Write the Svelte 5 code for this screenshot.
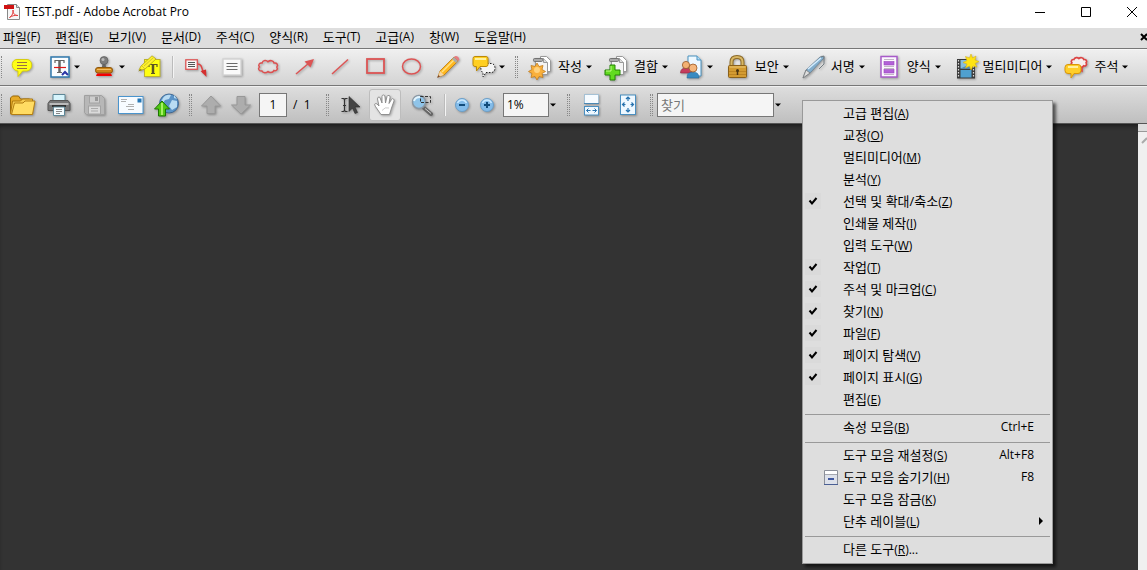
<svelte:options runes />
<script lang="ts">
  interface Tool {
    icon?: string;
    title?: string;
    text?: string;
    caret?: boolean;
    divider?: boolean;
    grip?: boolean;
  }

  interface MenuEntry {
    label?: string;
    key?: string;
    tail?: string;
    checked?: boolean;
    shortcut?: string;
    icon?: boolean;
    submenu?: boolean;
    separator?: boolean;
  }

  const menus = [
    { label: '파일', key: 'F' },
    { label: '편집', key: 'E' },
    { label: '보기', key: 'V' },
    { label: '문서', key: 'D' },
    { label: '주석', key: 'C' },
    { label: '양식', key: 'R' },
    { label: '도구', key: 'T' },
    { label: '고급', key: 'A' },
    { label: '창', key: 'W' },
    { label: '도움말', key: 'H' },
  ];

  const markupTools: Tool[] = [
    { icon: 'note', title: '스티커 메모' },
    { icon: 'textedit', title: '텍스트 편집', caret: true },
    { icon: 'stamp', title: '스탬프', caret: true },
    { icon: 'highlight', title: '텍스트 강조 표시' },
    { divider: true },
    { icon: 'callout', title: '설명선' },
    { icon: 'textbox', title: '텍스트 상자' },
    { icon: 'cloud', title: '구름' },
    { icon: 'arrow', title: '화살표' },
    { icon: 'line', title: '선' },
    { icon: 'rect', title: '직사각형' },
    { icon: 'ellipse', title: '타원' },
    { icon: 'pencil', title: '연필' },
    { icon: 'bubbles', title: '주석 표시', caret: true },
    { grip: true },
    { icon: 'create', text: '작성', caret: true },
    { icon: 'combine', text: '결합', caret: true },
    { icon: 'people', title: '공동 작업', caret: true },
    { icon: 'lock', text: '보안', caret: true },
    { icon: 'pen', text: '서명', caret: true },
    { icon: 'form', text: '양식', caret: true },
    { icon: 'film', text: '멀티미디어', caret: true },
    { icon: 'comments', text: '주석', caret: true },
  ];

  const fileTools: Tool[] = [
    { icon: 'folder', title: '열기' },
    { icon: 'printer', title: '인쇄' },
    { icon: 'save', title: '저장' },
    { icon: 'mail', title: '전자 메일' },
    { icon: 'upload', title: '업로드' },
  ];

  const entries: MenuEntry[] = [
    { label: '고급 편집', key: 'A' },
    { label: '교정', key: 'O' },
    { label: '멀티미디어', key: 'M' },
    { label: '분석', key: 'Y' },
    { label: '선택 및 확대/축소', key: 'Z', checked: true },
    { label: '인쇄물 제작', key: 'I' },
    { label: '입력 도구', key: 'W' },
    { label: '작업', key: 'T', checked: true },
    { label: '주석 및 마크업', key: 'C', checked: true },
    { label: '찾기', key: 'N', checked: true },
    { label: '파일', key: 'F', checked: true },
    { label: '페이지 탐색', key: 'V', checked: true },
    { label: '페이지 표시', key: 'G', checked: true },
    { label: '편집', key: 'E' },
    { separator: true },
    { label: '속성 모음', key: 'B', shortcut: 'Ctrl+E' },
    { separator: true },
    { label: '도구 모음 재설정', key: 'S', shortcut: 'Alt+F8' },
    { label: '도구 모음 숨기기', key: 'H', shortcut: 'F8', icon: true },
    { label: '도구 모음 잠금', key: 'K' },
    { label: '단추 레이블', key: 'L', submenu: true },
    { separator: true },
    { label: '다른 도구', key: 'R', tail: '...' },
  ];

  const cloudPath =
    'M6 16C3 16.500 1.500 13.500 3.500 12C1.500 9.500 4 7.500 6 8C7 5 10.500 5 12 6.800C14 4.800 17.500 5.500 18 8C21 7.500 22.500 10 20.800 12C22.500 14.500 20 16.500 18 15.500C16.500 18 13.500 18 12 16.500C10 18.500 7 18 6 16Z';

  let page = $state('1');
  let zoom = $state('1%');
  let query = $state('');
</script>

{#snippet caret()}
  <svg class="caret" viewBox="0 0 6 4" aria-hidden="true"><path d="M0 0.500h6L3 3.500z" /></svg>
{/snippet}

{#snippet papers()}
  <path d="M12.500 1.500h6l4 4v11h-10z" fill="#fff" stroke="#999" />
  <path d="M7.500 3.500h8l4 4v12h-12z" fill="#f4f4f4" stroke="#999" />
  <path d="M15.500 3.500v4h4" fill="#ddd" stroke="#999" />
  <rect x="5.500" y="3.500" width="9" height="3" rx="1" fill="#aaa" stroke="#666" stroke-width=".8" />
{/snippet}

{#snippet icon(name: string)}
  <svg class="icon" viewBox="0 0 24 24" fill="none" aria-hidden="true">
    {#if name === 'note'}
      <path d="M6 4.500h10c6 0 6.500 10.500 0 11.500h-4.500L7 21.500V16C-.5 15.500-.5 4.500 6 4.500z" fill="#ffff16" stroke="#d6cc10" />
      <path d="M6 7.500h10M6 10.500h10M6 13.500h10" stroke="#9a7043" />
    {:else if name === 'textedit'}
      <rect x="4" y="2" width="18" height="20" fill="#fafdff" stroke="#2f78ad" stroke-width="1.500" />
      <path d="M8 8V5.500h9V8M10 17.500h5" stroke="#666" stroke-width="1.200" />
      <path d="M12.500 5v12" stroke="#666" stroke-width="2.500" />
      <path d="M7 12.500h12" stroke="#e01818" stroke-width="1.200" />
      <path d="M15 20l3-3 3 3" stroke="#2b35a5" stroke-width="2" />
    {:else if name === 'stamp'}
      <path d="M10.500 9h3l1 5h-5z" fill="#666" />
      <circle cx="12" cy="5.500" r="4" fill="#7d7d7d" stroke="#555" stroke-width=".6" />
      <circle cx="11" cy="4.500" r="1.500" fill="#bbb" />
      <rect x="3.500" y="12.500" width="17" height="5.500" rx="2.500" fill="#cc8418" stroke="#8f570b" />
      <path d="M5 14.500h14" stroke="#f2bd61" />
      <path d="M5 18.500h14l1 2.500H4z" fill="#f50000" />
    {:else if name === 'highlight'}
      <rect x="7.500" y="4.500" width="15.500" height="17" fill="#ffff10" stroke="#bdb32c" />
      <path d="M12 12V9.500h8V12M14 18.500h4" stroke="#5c5524" stroke-width="1.200" />
      <path d="M16 9v9" stroke="#5c5524" stroke-width="2.500" />
      <path d="M2 15l2-4L15 .8l4 3.200L8 14l-5 1.500z" fill="#fff329" stroke="#b1a51d" stroke-width=".8" />
      <path d="M5 11l3 3M7 11l9-8" stroke="#d0c435" />
      <path d="M1 16.500l2.500-2.500 1.500 1z" fill="#887c15" />
    {:else if name === 'callout'}
      <rect x="1.800" y="4.800" width="11.500" height="9.500" fill="#f7f7f7" stroke="#dc5454" stroke-width="1.300" />
      <path d="M4 7.500h7M4 9.500h7M4 11.500h7" stroke="#555" />
      <path d="M13.500 9c4 0 4 3 6 9" stroke="#dc4444" stroke-width="1.500" />
      <path d="M16.500 16l5.500-1.500.5 7.500z" fill="#d52f2f" />
    {:else if name === 'textbox'}
      <rect x="3" y="4" width="18" height="16" fill="#fafafa" stroke="#d4d4d4" stroke-width="1.500" />
      <path d="M6.500 8.500h11M6.500 11.500h11M6.500 14.500h11" stroke="#6b6b6b" />
    {:else if name === 'cloud'}
      <path d={cloudPath} stroke="#dc5050" stroke-width="1.500" />
    {:else if name === 'arrow'}
      <path d="M4 19L17 8" stroke="#dc5454" stroke-width="1.500" />
      <path d="M22 4l-3.500 8.500-6-6z" fill="#dc5454" />
    {:else if name === 'line'}
      <path d="M4 19L20 4.500" stroke="#dc5454" stroke-width="1.500" />
    {:else if name === 'rect'}
      <rect x="3" y="4" width="17" height="14" stroke="#dc5454" stroke-width="1.800" />
    {:else if name === 'ellipse'}
      <ellipse cx="11.500" cy="11.500" rx="9" ry="7.500" stroke="#dc5454" stroke-width="1.500" />
    {:else if name === 'pencil'}
      <path d="M2 22l2-6L18 2l4 4L8 20z" fill="#ffb820" stroke="#b77810" stroke-width=".8" />
      <path d="M6 17L19 4" stroke="#ffe184" stroke-width="1.500" />
      <path d="M2 22l2-6 4 4z" fill="#f5d4a2" />
      <path d="M1 23l1.500-3 1.500 1.500z" fill="#7b4728" />
      <path d="M16 4l2-2 4 4-2 2z" fill="#aaa" />
      <path d="M18 2c2-3 7 1 4.500 4z" fill="#e77a80" />
    {:else if name === 'bubbles'}
      <path
        d="M12 8.500h8c4 1 4 8 0 9h-6l-3 4.500v-4.500c-3-1-3-8 1-9z"
        fill="#f4f4f4"
        stroke="#222"
        stroke-dasharray="1.500 1.500"
      />
      <path d="M3 1.500h11q2 0 2 2v6q0 2-2 2H8L4.500 16v-4.500H3q-2 0-2-2v-6q0-2 2-2z" fill="#ffcf22" stroke="#bc8908" />
      <path d="M3 4h11" stroke="#fff19b" stroke-width="2" />
    {:else if name === 'create'}
      {@render papers()}
      <path
        d="M9 8l2 3.500 4-1-1 4 3.500 2-3.500 2 1 4-4-1L9 25l-2-3.500-4 1 1-4-3.500-2 3.500-2-1-4 4 1z"
        fill="#f9b03c"
        stroke="#c27c1d"
        stroke-width=".8"
      />
      <circle cx="9" cy="15" r="3" fill="#ffd27e" />
    {:else if name === 'combine'}
      {@render papers()}
      <path d="M6 10h5v5h5v5h-5v5H6v-5H1v-5h5z" fill="#62db20" stroke="#258405" />
      <path d="M7 11v5H2" stroke="#bfff83" />
    {:else if name === 'people'}
      <path d="M8 1h9l4 4v16H8z" fill="#edf8ff" stroke="#4b93c0" />
      <path d="M17 1v4h4" fill="#b6ddf4" stroke="#4b93c0" />
      <path d="M.5 18q0-5 5.500-5t5.500 5z" fill="#c53c5d" stroke="#8d263f" stroke-width=".6" />
      <circle cx="6" cy="10" r="3.600" fill="#f3b173" stroke="#985926" stroke-width=".8" />
      <path d="M7 23q0-6 6-6t6 6z" fill="#398bc1" stroke="#276999" stroke-width=".6" />
      <circle cx="13" cy="13" r="4" fill="#f5b77d" stroke="#985926" stroke-width=".8" />
    {:else if name === 'lock'}
      <path d="M6.500 11V7q0-5 5.500-5t5.500 5v4" stroke="#8c6a27" stroke-width="4" />
      <path d="M6.500 11V7q0-5 5.500-5t5.500 5v4" stroke="#d8b765" stroke-width="2" />
      <rect x="3.500" y="10.500" width="18" height="12" rx="1" fill="#d39b31" stroke="#8a611a" />
      <path d="M4.500 12h16" stroke="#ecc878" />
      <path d="M4 16.500h17M4 19.500h17" stroke="#bd8422" />
      <circle cx="12.500" cy="15.500" r="1.500" fill="#4d3610" />
      <path d="M12.500 16v4" stroke="#4d3610" stroke-width="1.500" />
    {:else if name === 'pen'}
      <path d="M2 23l3-8L19 2q4-2 4 1L10 17z" fill="#81adcc" stroke="#6d8090" stroke-width=".8" />
      <path d="M7 14L20 3" stroke="#d4edff" stroke-width="1.500" />
      <path d="M2 23l3-8 4 3z" fill="#ddd" stroke="#777" stroke-width=".8" />
      <path d="M20 2l3-1v8l-5 5" stroke="#737d83" />
    {:else if name === 'form'}
      <rect x="4" y="1.500" width="16" height="20.500" fill="#fcf7ff" stroke="#a85bc9" stroke-width="1.500" />
      <path d="M7 4.500h10M7 11.500h10M7 13.500h10M7 19.500h10" stroke="#c2b8c6" />
      <rect x="7" y="6.500" width="10" height="3.500" fill="#b260d8" stroke="#9a48bd" stroke-width=".6" />
      <rect x="7" y="14.500" width="10" height="3.500" fill="#b260d8" stroke="#9a48bd" stroke-width=".6" />
    {:else if name === 'film'}
      <rect x="4" y="4" width="18" height="19.500" fill="#3a3a3a" />
      <path d="M5.500 5v18M20.500 5v18" stroke="#ddd" stroke-width="1.200" stroke-dasharray="1.500 1.500" />
      <rect x="7.500" y="5" width="11" height="8.500" fill="#86bedd" />
      <rect x="7.500" y="15" width="11" height="7.500" fill="#4fa0cf" />
      <path d="M7.500 13.500l11-5v5z" fill="#4c8dba" />
      <path
        d="M18-1l1.500 4 3.500-2-1 4 4 1.500-4 2 2 3.500-4-1-2 4-1.500-4-4 2 1.500-4-4-1.500 4-2-1.500-4 4 1.500z"
        fill="#ffe313"
        stroke="#d8b616"
        stroke-width=".6"
      />
    {:else if name === 'comments'}
      <g transform="translate(5 -2) scale(.82)">
        <path d={cloudPath} fill="#f6efee" stroke="#dc4444" stroke-width="2" />
      </g>
      <path d="M18 12v4l-3-2" stroke="#dc4444" stroke-width="1.500" />
      <path d="M4 9.500h10q3 0 3 3v3q0 3-3 3H10L7 23v-4.500H4q-3 0-3-3v-3q0-3 3-3z" fill="#ffce29" stroke="#d99609" />
      <path d="M4 12h10" stroke="#fff0a0" stroke-width="2" />
    {:else if name === 'folder'}
      <path d="M-.5 20V5l2-2h6l2 3h9v4" fill="#e6aa27" stroke="#9b6907" />
      <path d="M-.5 21l2-13h8l2-2h10v15z" fill="#f6cb50" stroke="#ad7810" />
      <path d="M.5 21.500L3.500 10H12l2-2h10l-2.500 13.500z" fill="#ffdc63" stroke="#b27d12" />
    {:else if name === 'printer'}
      <path d="M6 9V1.500h12V9" fill="#d7f4fc" stroke="#5d8797" />
      <path d="M3 7.500h18l2 3v7H1v-7z" fill="#777" stroke="#555" />
      <path d="M2.500 11h19" stroke="#bbb" stroke-width="2" />
      <path d="M5 13h14" stroke="#333" stroke-width="2" />
      <path d="M6.500 14h11v8.500h-11z" fill="#f5fcff" stroke="#5d8797" />
      <path d="M9 16.500h6M9 18.500h6M9 20.500h4" stroke="#888" />
    {:else if name === 'save'}
      <path d="M1.500 2.500h17l3 3v16h-18l-2-2z" fill="#b7b7b7" stroke="#a0a0a0" />
      <rect x="6.500" y="3" width="10" height="7" fill="#cdcdcd" stroke="#a3a3a3" />
      <rect x="12" y="4" width="3" height="4" fill="#999" />
      <rect x="5.500" y="13" width="12" height="8" fill="#dadada" stroke="#a3a3a3" />
      <path d="M8 15.500h7M8 18h7" stroke="#aaa" />
    {:else if name === 'mail'}
      <rect x="-.5" y="3.500" width="24.500" height="17" fill="#f7fbff" stroke="#4a94cd" />
      <rect x="18.500" y="5.500" width="4" height="4" fill="#2577b5" />
      <path d="M2 6.500h6M2 8.500h5M9 11.500h6M7 13.500h8M9 16.500h6" stroke="#b0b0b0" />
    {:else if name === 'upload'}
      <circle cx="14" cy="10.500" r="9.500" fill="#5b93c7" stroke="#315d8c" stroke-width=".8" />
      <path d="M8 5q3-4 8-3l-2 4-4 1-2 3-2-1zM17 7l5 1v6l-5 3-3-4zM19 2l3 4-3-1z" fill="#b9dcf3" />
      <path d="M7 8l7.500 8h-4v7h-7v-7h-4z" fill="#52c814" stroke="#1d7600" />
      <path d="M7 10v12" stroke="#a7f066" stroke-width="2" />
    {:else if name === 'up'}
      <path d="M12 3l9.500 10H16v7.500H8V13H2.500z" fill="#adadad" stroke="#989898" />
    {:else if name === 'down'}
      <path d="M12 21l9.500-9H16V3.500H8V12H2.500z" fill="#adadad" stroke="#989898" />
    {:else if name === 'select'}
      <path d="M2.500 5.500h2l1 1 1-1h2M5.500 6v12M2.500 18.500h2l1-1 1 1h2M4 12.500h3" stroke="#333" stroke-width="1.200" />
      <path d="M10 3.500v15l3.500-3.500 2.500 5.500 2.500-1-2.500-5.500h5z" fill="#444" stroke="#292929" stroke-width=".6" />
    {:else if name === 'hand'}
      <path
        d="M8 21.500L3.500 15q-3-4-1-4.500 1-.5 3.500 2.500L4.500 6q0-2 1.500-2 1 0 1.500 2l1.500 4V3.500Q9 2 10.500 2T12 4l.5 6 1.500-6.500q.5-1.500 2-1t1 2L16 10.500l2.500-4q1-1.500 2-.5t.5 2L18.500 15l-2 6.500z"
        fill="#fff"
        stroke="#888"
        stroke-width=".9"
      />
      <path d="M9 17.500q3-4 7-2.500" stroke="#ccc" />
    {:else if name === 'marquee'}
      <path d="M15 15l7 6" stroke="#666" stroke-width="4" stroke-linecap="round" />
      <path d="M16 15.500l6 5" stroke="#ccc" />
      <circle cx="10" cy="9" r="6.500" fill="#8fc4e9" stroke="#8b97a3" stroke-width="1.500" />
      <path d="M5 8q1-4 6-4" stroke="#e3f6ff" stroke-width="2" />
      <rect x="11.500" y="3.500" width="10" height="6" stroke="#333" stroke-dasharray="3 1.500" />
    {:else if name === 'minus' || name === 'plus'}
      <circle cx="12" cy="12" r="6.500" fill="#83bcea" stroke="#6c9fc8" />
      <path d="M7.500 10q1.500-3 4.500-3t4.500 3" stroke="#cae9ff" stroke-width="1.500" />
      <path d={name === 'plus' ? 'M9 12h6M12 9v6' : 'M9 12h6'} stroke="#124c7b" stroke-width="2" />
    {:else if name === 'fitwidth'}
      <rect x="4.500" y="1.500" width="14" height="9" fill="#f6fbff" stroke="#a5c1d5" />
      <path d="M4 10.500h15" stroke="#4b88b4" />
      <rect x="4.500" y="13.500" width="14" height="8.500" fill="#eff8ff" stroke="#4b8fc0" />
      <path d="M6.500 17.500h4M12.500 17.500h4M8.500 15.500l-2 2 2 2M14.500 15.500l2 2-2 2" stroke="#2772ae" />
    {:else if name === 'fitpage'}
      <rect x="4.500" y="2" width="15" height="19.500" fill="#eff8ff" stroke="#4b8fc0" />
      <path
        d="M12 4v4M12 15v4M6.500 11.500h3M14.500 11.500h3M10 6l2-2 2 2M10 17l2 2 2-2M8.500 9.500l-2 2 2 2M15.500 9.500l2 2-2 2"
        stroke="#2772ae"
        stroke-width="1.200"
      />
    {/if}
  </svg>
{/snippet}

{#snippet toolButton(tool: Tool, extra = '')}
  <button class="tool {extra}" title={tool.title} aria-label={tool.text ?? tool.title}>
    {@render icon(tool.icon ?? '')}
    {#if tool.text}<span class="tool-text">{tool.text}</span>{/if}
    {#if tool.caret}{@render caret()}{/if}
  </button>
{/snippet}

<div class="window">
  <header class="titlebar">
    <svg class="logo" viewBox="0 0 16 16" aria-hidden="true">
      <path d="M3.500.5h9l3 3v12h-12z" fill="#f7f7f7" stroke="#888" />
      <path d="M12.500.5v3h3" fill="#ddd" stroke="#888" />
      <path d="M0 1h10v4H0z" fill="#cf1212" />
      <path d="M5.500 13.500c3-2 4-5 3.500-7.500 0 4 2 5.500 5 5.500-4-.5-6 .5-8.500 2z" fill="none" stroke="#e33d3d" />
    </svg>
    <h1>TEST.pdf - Adobe Acrobat Pro</h1>
    <div class="controls">
      <button aria-label="최소화"><svg viewBox="0 0 10 10"><path d="M0 5.500h10" /></svg></button>
      <button aria-label="최대화"><svg viewBox="0 0 10 10"><path d="M.5.5h9v9h-9z" /></svg></button>
      <button aria-label="닫기"><svg viewBox="0 0 10 10"><path d="M0 0l10 10M10 0L0 10" /></svg></button>
    </div>
  </header>

  <nav class="menubar" aria-label="메뉴">
    {#each menus as menu (menu.key)}
      <button>{menu.label}<span class="latin">({menu.key})</span></button>
    {/each}
    <button class="close-doc" aria-label="문서 닫기">
      <svg viewBox="0 0 6 6"><path d="M0 0l6 6M6 0L0 6" /></svg>
    </button>
  </nav>

  <div class="toolbar toolbar-light">
    <span class="grip grip-edge"></span>
    {#each markupTools as tool}
      {#if tool.divider}
        <span class="divider"></span>
      {:else if tool.grip}
        <span class="grip"></span>
      {:else}
        {@render toolButton(tool)}
      {/if}
    {/each}
  </div>

  <div class="toolbar toolbar-dark">
    <span class="grip grip-edge"></span>
    {#each fileTools as tool}
      {@render toolButton(tool)}
    {/each}
    <span class="grip"></span>
    {@render toolButton({ icon: 'up', title: '이전 페이지' }, 'tool-page')}
    {@render toolButton({ icon: 'down', title: '다음 페이지' }, 'tool-page')}
    <label class="page">
      <input class="field field-page" aria-label="페이지" bind:value={page} />
      <span>/&nbsp; 1</span>
    </label>
    <span class="grip"></span>
    {@render toolButton({ icon: 'select', title: '선택 도구' })}
    {@render toolButton({ icon: 'hand', title: '손 도구' }, 'tool-active')}
    {@render toolButton({ icon: 'marquee', title: '선택 윤곽 확대/축소' })}
    <span class="divider"></span>
    {@render toolButton({ icon: 'minus', title: '축소' }, 'tool-zoom')}
    {@render toolButton({ icon: 'plus', title: '확대' }, 'tool-zoom')}
    <input class="field field-zoom" aria-label="배율" bind:value={zoom} />
    <button class="drop" aria-label="배율 목록">{@render caret()}</button>
    <span class="grip"></span>
    {@render toolButton({ icon: 'fitwidth', title: '폭 맞추기' })}
    {@render toolButton({ icon: 'fitpage', title: '한 페이지' })}
    <span class="grip"></span>
    <input class="field field-find" aria-label="찾기" placeholder="찾기" bind:value={query} />
    <button class="drop" aria-label="찾기 옵션">{@render caret()}</button>
  </div>

  <main class="workspace">
    <div class="scrollbar">
      <div class="split"></div>
      <svg viewBox="0 0 9 8"><path d="M4 7l5-5" /></svg>
    </div>
  </main>

  <div class="popup" role="menu">
    {#each entries as entry}
      {#if entry.separator}
        <hr />
      {:else}
        <button
          class="entry"
          role={entry.checked ? 'menuitemcheckbox' : 'menuitem'}
          aria-checked={entry.checked ? true : undefined}
        >
          <span class="check" class:checked={entry.checked}>
            {#if entry.checked}
              <svg viewBox="0 0 8 8"><path d="M.5 3.500L3 6.500 7.500 1" /></svg>
            {/if}
          </span>
          <span class="entry-icon">
            {#if entry.icon}
              <svg viewBox="0 0 14 15">
                <path d="M.5.500h13v14H.5z" fill="#dde1ea" stroke="#8b8f99" />
                <path d="M1 1h12v3H1z" fill="#fff" />
                <path d="M1 4.500h12" stroke="#a5a8b0" />
                <path d="M4 9h6" stroke="#3f57a0" stroke-width="2" />
                <path d="M0 14.500h14" stroke="#4a5f94" />
              </svg>
            {/if}
          </span>
          <span class="entry-label">{entry.label}<span class="latin">(<u>{entry.key}</u>){entry.tail ?? ''}</span></span>
          <span class="shortcut latin">{entry.shortcut ?? ''}</span>
          {#if entry.submenu}
            <svg class="submenu" viewBox="0 0 4 8"><path d="M0 0l4 4-4 4z" /></svg>
          {/if}
        </button>
      {/if}
    {/each}
  </div>
</div>

<style>
  :global(body) {
    margin: 0;
  }

  .window {
    position: relative;
    display: flex;
    flex-direction: column;
    min-height: 100vh;
    overflow: hidden;
    background: #333;
    color: #000;
    font-family: 'Open Sans', 'Noto Sans CJK KR', sans-serif;
    font-size: 13px;
    line-height: 16px;
  }

  button {
    display: flex;
    align-items: center;
    padding: 0;
    border: none;
    background: none;
    color: inherit;
    font: inherit;
    white-space: nowrap;
  }

  svg {
    display: block;
    flex-shrink: 0;
    overflow: visible;
  }

  .latin {
    font-size: 12px;
  }

  .titlebar {
    display: flex;
    align-items: center;
    height: 28px;
    padding: 0 10px 4px 4px;
    box-sizing: border-box;
    background: #fff;
  }

  .logo {
    width: 16px;
    height: 16px;
  }

  h1 {
    flex: 1;
    margin: 0 0 0 5px;
    font-size: 12px;
    font-weight: 400;
  }

  .controls {
    display: flex;
    gap: 36px;
  }

  .controls svg {
    width: 10px;
    height: 10px;
    fill: none;
    stroke: #000;
  }

  .menubar {
    display: flex;
    align-items: center;
    gap: 15px;
    height: 20px;
    padding: 0 0 3px 3px;
    box-sizing: border-box;
    background: #dedede;
  }

  .close-doc {
    margin-left: auto;
  }

  .close-doc svg {
    width: 6px;
    height: 6px;
    stroke: #000;
    stroke-width: 2;
  }

  .toolbar {
    display: flex;
    align-items: center;
    box-sizing: border-box;
    border-top: 1px solid #777;
  }

  .toolbar-light {
    height: 37px;
    padding-bottom: 1px;
    background: linear-gradient(#f0f0f0, #d3d3d3);
    box-shadow: inset 0 1px #f8f8f8;
  }

  .toolbar-dark {
    height: 39px;
    border-bottom: 1px solid #555;
    background: linear-gradient(#dedede, #bfbfbf);
    box-shadow: inset 0 1px #f0f0f0;
  }

  .grip {
    width: 3px;
    height: 22px;
    margin: 0 4px;
    box-sizing: border-box;
    flex-shrink: 0;
    border: 1px dotted #888;
    border-width: 0 1px;
  }

  .grip-edge {
    width: 1px;
    margin: 0 3px 0 1px;
    border-right: none;
  }

  .divider {
    width: 1px;
    height: 22px;
    margin: 0 5px;
    flex-shrink: 0;
    background: #bbb;
    box-shadow: 1px 0 #f4f4f4;
  }

  .tool {
    height: 30px;
    padding: 0 6px;
    flex-shrink: 0;
  }

  .tool-text {
    margin: 0 1px 1px 6px;
  }

  .tool-page {
    padding: 0 3px;
  }

  .tool-zoom {
    width: 25px;
    padding: 0;
  }

  .tool-active {
    height: 32px;
    margin-right: 2px;
    padding: 0 3px;
    border: 1px solid #bdbdbd;
    border-radius: 3px;
    background: #e4e4e4;
  }

  .icon {
    width: 24px;
    height: 24px;
    filter: drop-shadow(1px 1px 1px rgb(0 0 0 / 30%));
  }

  .caret {
    width: 6px;
    height: 4px;
    margin-left: 3px;
  }

  .page {
    display: flex;
    align-items: center;
    margin: 0 12px 0 3px;
    font-size: 12px;
  }

  .page span {
    width: 17px;
    margin-left: 6px;
    white-space: nowrap;
  }

  .field {
    height: 24px;
    box-sizing: border-box;
    border: 1px solid #777;
    border-radius: 0;
    outline: none;
    background: #f5f5f5;
    color: #000;
    font: inherit;
  }

  .field-page {
    width: 28px;
    padding: 0;
    text-align: center;
  }

  .field-zoom {
    width: 46px;
    margin-left: 3px;
    padding: 0 3px;
    font-size: 12px;
  }

  .field-find {
    width: 117px;
    padding: 0 3px;
  }

  .field-find::placeholder {
    color: #777;
  }

  .drop {
    width: 14px;
    height: 24px;
  }

  .drop .caret {
    margin-left: 1px;
  }

  .workspace {
    display: flex;
    flex: 1;
    justify-content: flex-end;
    box-shadow: inset 0 4px 4px -2px #1c1c1c;
  }

  .scrollbar {
    width: 9px;
    background: #f0f0f0;
  }

  .split {
    height: 7px;
    border-bottom: 1px solid #999;
    background: #dedede;
  }

  .scrollbar svg {
    width: 9px;
    height: 8px;
    margin-top: 4px;
    stroke: #aaa;
    stroke-width: 2;
  }

  .popup {
    position: absolute;
    top: 100px;
    left: 802px;
    width: 251px;
    padding: 1px 2px 3px;
    box-sizing: border-box;
    border: 1px solid #999;
    background: #dedede;
    box-shadow: 3px 3px 3px rgb(0 0 0 / 60%);
  }

  .popup hr {
    height: 1px;
    margin: 4px 0 1px;
    border: none;
    background: #999;
  }

  .entry {
    position: relative;
    width: 100%;
    height: 22px;
    padding: 0 16px 0 0;
  }

  .check {
    display: flex;
    align-items: center;
    justify-content: center;
    width: 16px;
    height: 16px;
  }

  .checked {
    background: #dadada;
  }

  .check svg {
    width: 8px;
    height: 8px;
    fill: none;
    stroke: #000;
    stroke-width: 2;
  }

  .entry-icon {
    width: 19px;
    margin-right: 3px;
  }

  .entry-icon svg {
    width: 14px;
    height: 15px;
    margin-left: 3px;
  }

  .entry-label {
    flex: 1;
    text-align: left;
  }

  .submenu {
    position: absolute;
    right: 7px;
    width: 4px;
    height: 8px;
  }
</style>
